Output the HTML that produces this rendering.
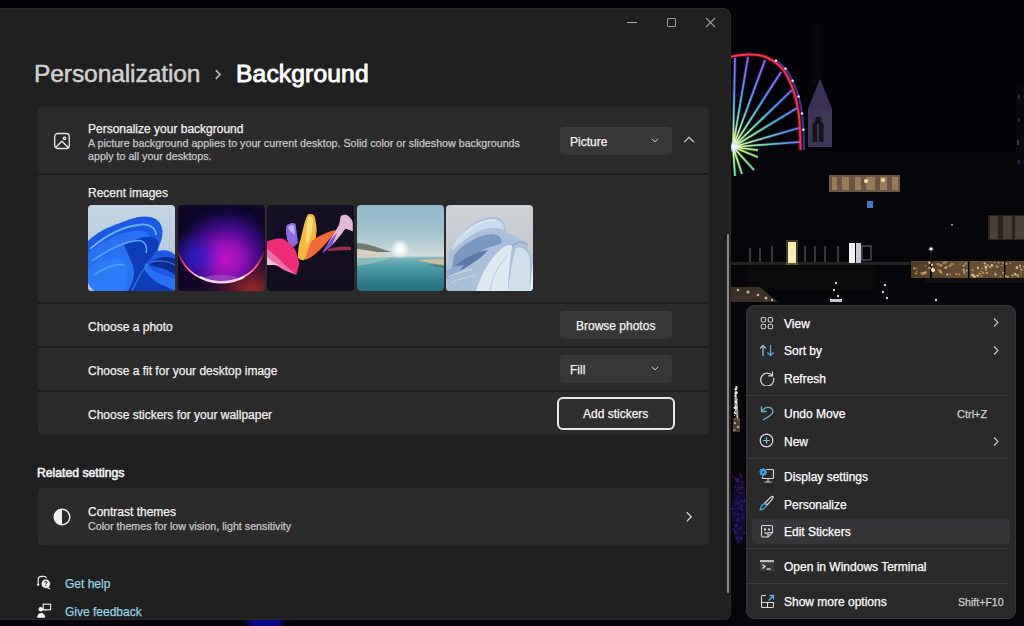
<!DOCTYPE html>
<html><head><meta charset="utf-8">
<style>
*{box-sizing:border-box;margin:0;padding:0}
html,body{width:1024px;height:626px;overflow:hidden;background:#040408;font-family:"Liberation Sans",sans-serif}
.abs{position:absolute}
.t{position:absolute;white-space:nowrap;line-height:0;transform:translateY(1px);-webkit-text-stroke:0.25px currentColor}
#wall{position:absolute;left:0;top:0;width:1024px;height:626px;background:#050409}
#win{position:absolute;left:0;top:8px;width:731px;height:612px;background:#202020;border-radius:0 8px 6px 0;border:1px solid #282828;border-left:none;overflow:hidden}
.card{position:absolute;left:38px;width:671px;background:#2b2b2b;border-radius:4px}
.sep{position:absolute;left:38px;width:671px;height:2px;background:#1e1e1e}
.btn{position:absolute;background:#373737;border-radius:4px;border-top:1px solid #3d3d3d}
.thumb{position:absolute;top:205px;width:87px;height:86px;border-radius:4px;overflow:hidden}
#menu{position:absolute;left:746px;top:305px;width:270px;height:314px;background:#2a2a2b;border-radius:8px;border:1px solid #353536}
.mi{color:#ffffff;font-size:12px}
.msep{position:absolute;left:747px;width:261px;height:1px;background:#3c3b3a}
</style></head><body>
<div id="wall"><svg width="1024" height="626" viewBox="0 0 1024 626" style="position:absolute;left:0;top:0">
<defs>
<radialGradient id="spg" gradientUnits="userSpaceOnUse" cx="733" cy="147" r="95"><stop offset="0" stop-color="#ffffff"/><stop offset=".12" stop-color="#c8f880"/><stop offset=".35" stop-color="#60e0b0"/><stop offset=".6" stop-color="#5a90ff"/><stop offset="1" stop-color="#a058ff"/></radialGradient>
<radialGradient id="glow" cx="50%" cy="50%" r="50%"><stop offset="0" stop-color="#fff" stop-opacity=".9"/><stop offset="1" stop-color="#fff" stop-opacity="0"/></radialGradient>
<radialGradient id="hubg" cx="50%" cy="50%" r="50%"><stop offset="0" stop-color="#fff"/><stop offset=".4" stop-color="#e0f0ff" stop-opacity=".8"/><stop offset="1" stop-color="#a0c0ff" stop-opacity="0"/></radialGradient>
<linearGradient id="str" x1="0" x2="1"><stop offset="0" stop-color="#6a4e34"/><stop offset=".5" stop-color="#8a6a44"/><stop offset="1" stop-color="#7a5e3e"/></linearGradient>
<linearGradient id="bsm" x1="0" x2="1"><stop offset="0" stop-color="#0a0a80" stop-opacity="0"/><stop offset=".2" stop-color="#0a0a88"/><stop offset=".8" stop-color="#0a0a88"/><stop offset="1" stop-color="#0a0a80" stop-opacity="0"/></linearGradient>
</defs>
<rect width="1024" height="626" fill="#040308"/>
<rect x="731" y="150" width="293" height="476" fill="#060509"/>
<line x1="733" y1="147" x2="735" y2="58" stroke="#6a6cff" stroke-width="3.5" opacity=".25"/><line x1="733" y1="147" x2="748" y2="57" stroke="#8a5cff" stroke-width="3.5" opacity=".25"/><line x1="733" y1="147" x2="765" y2="60" stroke="#9a60ff" stroke-width="3.5" opacity=".25"/><line x1="733" y1="147" x2="781" y2="72" stroke="#6a80ff" stroke-width="3.5" opacity=".25"/><line x1="733" y1="147" x2="792" y2="90" stroke="#40b8f0" stroke-width="3.5" opacity=".25"/><line x1="733" y1="147" x2="797" y2="108" stroke="#40d8c0" stroke-width="3.5" opacity=".25"/><line x1="733" y1="147" x2="799" y2="128" stroke="#8a70ff" stroke-width="3.5" opacity=".25"/><line x1="733" y1="147" x2="800" y2="142" stroke="#6a7aff" stroke-width="3.5" opacity=".25"/><line x1="733" y1="147" x2="772" y2="152" stroke="#a0f080" stroke-width="3.5" opacity=".25"/><line x1="733" y1="147" x2="760" y2="158" stroke="#d0f060" stroke-width="3.5" opacity=".25"/><line x1="733" y1="147" x2="754" y2="170" stroke="#90f080" stroke-width="3.5" opacity=".25"/><line x1="733" y1="147" x2="742" y2="174" stroke="#60e0a0" stroke-width="3.5" opacity=".25"/><line x1="733" y1="147" x2="735" y2="176" stroke="#40c8c0" stroke-width="3.5" opacity=".25"/><line x1="733" y1="147" x2="735" y2="58" stroke="url(#spg)" stroke-width="1.7"/><line x1="733" y1="147" x2="748" y2="57" stroke="url(#spg)" stroke-width="1.7"/><line x1="733" y1="147" x2="765" y2="60" stroke="url(#spg)" stroke-width="1.7"/><line x1="733" y1="147" x2="781" y2="72" stroke="url(#spg)" stroke-width="1.7"/><line x1="733" y1="147" x2="792" y2="90" stroke="url(#spg)" stroke-width="1.7"/><line x1="733" y1="147" x2="797" y2="108" stroke="url(#spg)" stroke-width="1.7"/><line x1="733" y1="147" x2="799" y2="128" stroke="url(#spg)" stroke-width="1.7"/><line x1="733" y1="147" x2="800" y2="142" stroke="url(#spg)" stroke-width="1.7"/><line x1="733" y1="147" x2="772" y2="152" stroke="url(#spg)" stroke-width="1.7"/><line x1="733" y1="147" x2="760" y2="158" stroke="url(#spg)" stroke-width="1.7"/><line x1="733" y1="147" x2="754" y2="170" stroke="url(#spg)" stroke-width="1.7"/><line x1="733" y1="147" x2="742" y2="174" stroke="url(#spg)" stroke-width="1.7"/><line x1="733" y1="147" x2="735" y2="176" stroke="url(#spg)" stroke-width="1.7"/>
<path d="M776.0,60.6 C777.6,62.0 782.7,65.4 785.5,68.7 C788.3,72.1 790.5,76.2 792.6,80.8 C794.8,85.5 797.0,91.1 798.5,96.5 C800.1,101.9 801.2,107.8 802.0,113.4 C802.8,118.9 803.0,123.7 803.4,129.8 C803.7,135.9 803.8,146.7 803.9,150.0" stroke="#3a5ad0" stroke-width="2" fill="none" opacity=".7"/>
<path d="M726,58 C726.8,57.8 727.1,57.4 730.6,56.8 C734.1,56.2 741.9,54.6 747.3,54.5 C752.7,54.4 758.5,54.8 763,56 C767.5,57.2 770.7,59.2 774,61.5 C777.3,63.8 780.4,66.2 783,69.5 C785.6,72.8 787.7,76.9 789.8,81.5 C791.9,86.1 793.9,91.6 795.4,97 C796.9,102.4 797.9,108.2 798.7,113.7 C799.5,119.2 799.7,124.0 800,130 C800.3,136.1 800.4,146.7 800.5,150" stroke="#ff2040" stroke-width="4" fill="none" opacity=".35"/>
<path d="M726,58 C726.8,57.8 727.1,57.4 730.6,56.8 C734.1,56.2 741.9,54.6 747.3,54.5 C752.7,54.4 758.5,54.8 763,56 C767.5,57.2 770.7,59.2 774,61.5 C777.3,63.8 780.4,66.2 783,69.5 C785.6,72.8 787.7,76.9 789.8,81.5 C791.9,86.1 793.9,91.6 795.4,97 C796.9,102.4 797.9,108.2 798.7,113.7 C799.5,119.2 799.7,124.0 800,130 C800.3,136.1 800.4,146.7 800.5,150" stroke="#ff3050" stroke-width="1.9" fill="none"/>
<circle cx="776.0" cy="60.6" r="1.2" fill="#f0f0ff"/><circle cx="785.5" cy="68.7" r="1.2" fill="#f0f0ff"/><circle cx="792.6" cy="80.8" r="1.2" fill="#f0f0ff"/><circle cx="798.5" cy="96.5" r="1.2" fill="#f0f0ff"/><circle cx="802.0" cy="113.4" r="1.2" fill="#f0f0ff"/><circle cx="803.4" cy="129.8" r="1.2" fill="#f0f0ff"/>
<circle cx="733" cy="147" r="6" fill="url(#hubg)"/>
<path d="M758 149H792V176H758Z" fill="#08070c"/>
<path d="M813 24H823V84H813Z" fill="#09080f"/>
<path d="M808 109L820 79L832 109V147H808Z" fill="#3e3656"/>
<path d="M808 109L820 79L832 109Z" fill="#3a3052"/>
<path d="M812.5 142V126A5.5 5.5 0 0 1 823.5 126V142Z" fill="#16121e"/>
<line x1="818" y1="124" x2="818" y2="142" stroke="#5a5470" stroke-width="1"/>
<circle cx="818.4" cy="119.6" r="3" fill="#16121e"/>
<rect x="829" y="175" width="71" height="17" fill="#6a5442"/>
<g fill="#9a7a58"><rect x="832" y="177" width="5" height="13"/><rect x="842" y="177" width="7" height="13"/><rect x="855" y="177" width="6" height="13"/><rect x="866" y="177" width="9" height="13"/><rect x="880" y="177" width="7" height="13"/><rect x="892" y="177" width="6" height="13"/></g>
<circle cx="866" cy="181" r="2" fill="#ffe8b0"/><circle cx="883" cy="180" r="2" fill="#ffd8a0"/>
<rect x="867" y="201" width="6" height="7" fill="#4a78c8"/>
<rect x="988" y="215" width="36" height="25" fill="#2a2420"/>
<g fill="#4a4038"><rect x="990" y="216" width="8" height="23"/><rect x="1003" y="216" width="9" height="23"/><rect x="1015" y="216" width="9" height="23"/></g>
<rect x="731" y="262" width="180" height="3" fill="#24221f"/><rect x="745" y="265" width="130" height="25" fill="#0c0b0c"/>
<g stroke="#5a5a54" stroke-width="1.2"><line x1="750" y1="248" x2="750" y2="262"/><line x1="760" y1="248" x2="760" y2="262"/><line x1="772" y1="246" x2="772" y2="262"/><line x1="805" y1="246" x2="805" y2="262"/><line x1="815" y1="246" x2="815" y2="262"/><line x1="825" y1="246" x2="825" y2="262"/><line x1="838" y1="246" x2="838" y2="262"/></g>
<rect x="786" y="240" width="12" height="25" fill="#f0e080" opacity=".25"/>
<rect x="788" y="242" width="8" height="21" fill="#f6eeb4"/>
<rect x="849" y="243" width="6" height="20" fill="#f0f0f0"/>
<rect x="856" y="243" width="5" height="20" fill="#c8c8d0"/>
<rect x="862" y="246" width="9" height="14" fill="none" stroke="#6a6a70" stroke-width="1"/>
<rect x="911" y="261" width="113" height="17" fill="url(#str)" opacity=".75"/><g fill="#050408"><rect x="930" y="261" width="2" height="17"/><rect x="968" y="261" width="1.5" height="17"/><rect x="1004" y="261" width="1.5" height="17"/></g>
<g opacity=".85"><circle cx="938.7" cy="270.2" r="0.9" fill="#c89060"/><circle cx="982.1" cy="263.0" r="0.6" fill="#c89060"/><circle cx="941.0" cy="265.5" r="1.4" fill="#c89060"/><circle cx="972.6" cy="270.2" r="0.9" fill="#d8a868"/><circle cx="938.0" cy="264.3" r="1.3" fill="#c89060"/><circle cx="995.0" cy="272.1" r="0.7" fill="#e8c890"/><circle cx="945.7" cy="262.5" r="1.3" fill="#c89060"/><circle cx="978.6" cy="275.8" r="0.9" fill="#c89060"/><circle cx="956.2" cy="274.0" r="1.0" fill="#d8a868"/><circle cx="1010.4" cy="263.5" r="0.7" fill="#d8a868"/><circle cx="940.9" cy="272.1" r="1.2" fill="#f0d8a8"/><circle cx="959.2" cy="274.5" r="1.1" fill="#c89060"/><circle cx="977.4" cy="275.6" r="1.1" fill="#e8c890"/><circle cx="1007.9" cy="276.9" r="1.1" fill="#d8a868"/><circle cx="990.2" cy="266.9" r="1.0" fill="#e8c890"/><circle cx="991.9" cy="265.2" r="1.3" fill="#f0d8a8"/><circle cx="943.9" cy="263.0" r="1.3" fill="#c89060"/><circle cx="921.9" cy="274.0" r="0.9" fill="#d8a868"/><circle cx="914.3" cy="268.4" r="0.9" fill="#e8c890"/><circle cx="916.9" cy="271.2" r="0.6" fill="#f0d8a8"/><circle cx="973.7" cy="275.8" r="0.8" fill="#d8a868"/><circle cx="1023.8" cy="266.6" r="0.7" fill="#e8c890"/><circle cx="1018.3" cy="276.6" r="0.8" fill="#f0d8a8"/><circle cx="929.5" cy="262.6" r="1.3" fill="#f0d8a8"/><circle cx="952.3" cy="264.1" r="1.3" fill="#c89060"/><circle cx="963.6" cy="269.8" r="1.1" fill="#e8c890"/><circle cx="981.5" cy="276.1" r="1.0" fill="#c89060"/><circle cx="983.0" cy="272.7" r="1.3" fill="#c89060"/><circle cx="1021.5" cy="269.8" r="1.0" fill="#e8c890"/><circle cx="1000.3" cy="276.8" r="0.9" fill="#c89060"/><circle cx="981.0" cy="271.5" r="0.6" fill="#f0d8a8"/><circle cx="964.2" cy="272.2" r="0.9" fill="#f0d8a8"/><circle cx="994.7" cy="262.3" r="0.6" fill="#e8c890"/><circle cx="1019.9" cy="265.8" r="1.0" fill="#f0d8a8"/><circle cx="931.9" cy="264.8" r="1.2" fill="#f0d8a8"/><circle cx="945.6" cy="267.7" r="1.2" fill="#e8c890"/><circle cx="1020.8" cy="272.3" r="0.7" fill="#d8a868"/><circle cx="985.2" cy="266.0" r="0.9" fill="#c89060"/><circle cx="984.7" cy="263.5" r="1.1" fill="#f0d8a8"/><circle cx="987.6" cy="265.4" r="1.2" fill="#d8a868"/><circle cx="921.0" cy="273.1" r="0.8" fill="#c89060"/><circle cx="942.3" cy="273.8" r="0.6" fill="#d8a868"/><circle cx="947.3" cy="274.5" r="1.1" fill="#f0d8a8"/><circle cx="950.1" cy="274.4" r="0.7" fill="#f0d8a8"/><circle cx="978.0" cy="268.3" r="1.0" fill="#f0d8a8"/><circle cx="964.0" cy="271.5" r="0.8" fill="#c89060"/><circle cx="916.0" cy="268.2" r="0.8" fill="#c89060"/><circle cx="1017.6" cy="275.2" r="1.4" fill="#c89060"/><circle cx="974.6" cy="276.8" r="1.2" fill="#e8c890"/><circle cx="995.5" cy="274.6" r="1.1" fill="#f0d8a8"/><circle cx="972.9" cy="275.3" r="1.3" fill="#f0d8a8"/><circle cx="925.4" cy="265.7" r="0.6" fill="#d8a868"/><circle cx="1012.4" cy="275.5" r="1.1" fill="#e8c890"/><circle cx="965.9" cy="263.8" r="1.0" fill="#d8a868"/><circle cx="986.2" cy="269.9" r="0.9" fill="#e8c890"/><circle cx="950.2" cy="265.8" r="1.3" fill="#c89060"/><circle cx="1002.9" cy="262.9" r="0.8" fill="#e8c890"/><circle cx="971.9" cy="274.3" r="0.7" fill="#f0d8a8"/><circle cx="1015.2" cy="274.1" r="1.3" fill="#e8c890"/><circle cx="966.6" cy="270.6" r="0.9" fill="#f0d8a8"/><circle cx="939.8" cy="271.3" r="1.0" fill="#e8c890"/><circle cx="965.0" cy="273.6" r="0.6" fill="#e8c890"/><circle cx="998.8" cy="262.7" r="0.6" fill="#c89060"/><circle cx="1021.2" cy="274.8" r="0.7" fill="#c89060"/><circle cx="947.4" cy="266.7" r="0.9" fill="#c89060"/><circle cx="977.7" cy="267.4" r="0.8" fill="#f0d8a8"/><circle cx="960.0" cy="263.9" r="0.6" fill="#c89060"/><circle cx="1001.1" cy="270.5" r="0.6" fill="#c89060"/><circle cx="979.7" cy="273.7" r="0.9" fill="#e8c890"/><circle cx="981.8" cy="268.5" r="0.9" fill="#c89060"/><circle cx="997.1" cy="266.7" r="1.4" fill="#c89060"/><circle cx="963.6" cy="265.7" r="1.0" fill="#e8c890"/><circle cx="1002.0" cy="265.4" r="0.7" fill="#e8c890"/><circle cx="1016.9" cy="267.6" r="1.3" fill="#f0d8a8"/><circle cx="925.6" cy="272.4" r="1.4" fill="#c89060"/><circle cx="986.8" cy="273.0" r="1.1" fill="#e8c890"/><circle cx="1002.9" cy="272.7" r="1.0" fill="#d8a868"/><circle cx="998.7" cy="262.7" r="0.7" fill="#e8c890"/><circle cx="985.8" cy="267.6" r="1.3" fill="#f0d8a8"/><circle cx="1006.3" cy="263.8" r="1.3" fill="#c89060"/><circle cx="1005.7" cy="276.3" r="1.1" fill="#e8c890"/><circle cx="916.1" cy="273.5" r="1.0" fill="#d8a868"/><circle cx="924.0" cy="273.2" r="1.3" fill="#e8c890"/><circle cx="973.6" cy="275.0" r="0.7" fill="#e8c890"/><circle cx="939.1" cy="264.7" r="0.8" fill="#c89060"/><circle cx="940.3" cy="271.0" r="1.4" fill="#c89060"/><circle cx="1020.2" cy="267.6" r="0.8" fill="#c89060"/><circle cx="1006.5" cy="276.5" r="0.9" fill="#c89060"/><circle cx="929.5" cy="268.0" r="1.3" fill="#d8a868"/><circle cx="922.7" cy="273.2" r="1.3" fill="#c89060"/></g>
<circle cx="933" cy="270" r="2" fill="#ffe8c0"/>
<rect x="925" y="278" width="99" height="5" fill="#121010"/>
<circle cx="931" cy="249" r="3" fill="url(#glow)"/><circle cx="931" cy="249" r="1.3" fill="#fff"/>
<line x1="931" y1="250" x2="931" y2="262" stroke="#2a2824" stroke-width="1"/>
<circle cx="952" cy="225" r="1" fill="#a0a0a0"/>
<rect x="1016" y="85" width="8" height="80" fill="#08080e"/><g fill="#2c3458"><rect x="1018" y="95" width="1.5" height="4"/><rect x="1018" y="118" width="1.5" height="4"/><rect x="1017" y="140" width="2" height="5"/><rect x="1018" y="160" width="1.5" height="4"/></g>
<path d="M731 287L760 287L778 302L731 302Z" fill="#3a3028"/>
<g fill="#d8c0a0" opacity=".9"><circle cx="738" cy="290" r="1.3"/><circle cx="748" cy="292" r="1.5"/><circle cx="758" cy="295" r="1.3"/><circle cx="766" cy="298" r="1.5"/><circle cx="772" cy="300" r="1.2"/></g>
<g fill="#d8d0c0"><circle cx="836" cy="283" r="1.2"/><circle cx="834" cy="290" r="1.2"/><circle cx="838" cy="296" r="1.2"/><circle cx="885" cy="285" r="1.2"/><circle cx="883" cy="292" r="1.2"/><circle cx="887" cy="298" r="1.2"/><circle cx="936" cy="300" r="1.2"/></g>
<rect x="830" y="299" width="12" height="3" fill="#c8c8d0"/>
<path d="M735.8 387C737 396 738.5 410 738.5 421C737 421 734.5 412 734.2 400Z" fill="#a09888"/>
<g><circle cx="736.2" cy="401.4" r="1.1" fill="#f0e8e0"/><circle cx="736.0" cy="401.8" r="0.9" fill="#f0e8e0"/><circle cx="736.0" cy="392.3" r="0.9" fill="#f0e8e0"/><circle cx="734.3" cy="413.0" r="0.7" fill="#f0e8e0"/><circle cx="736.4" cy="389.1" r="0.9" fill="#f0e8e0"/><circle cx="736.5" cy="387.4" r="1.1" fill="#f0e8e0"/><circle cx="736.4" cy="408.2" r="0.6" fill="#f0e8e0"/><circle cx="736.0" cy="386.5" r="0.5" fill="#f0e8e0"/><circle cx="735.6" cy="392.5" r="0.5" fill="#f0e8e0"/><circle cx="735.8" cy="401.8" r="1.0" fill="#f0e8e0"/><circle cx="736.4" cy="403.7" r="0.8" fill="#f0e8e0"/><circle cx="735.8" cy="408.5" r="0.7" fill="#f0e8e0"/><circle cx="738.5" cy="419.9" r="1.0" fill="#f0e8e0"/><circle cx="735.3" cy="410.1" r="0.6" fill="#f0e8e0"/><circle cx="735.1" cy="395.8" r="1.0" fill="#f0e8e0"/><circle cx="736.9" cy="399.6" r="0.7" fill="#f0e8e0"/><circle cx="737.7" cy="418.6" r="0.5" fill="#f0e8e0"/><circle cx="736.7" cy="393.1" r="0.8" fill="#f0e8e0"/><circle cx="735.5" cy="419.3" r="0.5" fill="#f0e8e0"/><circle cx="737.0" cy="407.4" r="0.7" fill="#f0e8e0"/><circle cx="735.8" cy="389.0" r="1.1" fill="#f0e8e0"/><circle cx="734.5" cy="411.8" r="0.6" fill="#f0e8e0"/><circle cx="735.4" cy="389.4" r="1.0" fill="#f0e8e0"/><circle cx="736.1" cy="392.0" r="0.8" fill="#f0e8e0"/><circle cx="736.4" cy="392.5" r="0.6" fill="#f0e8e0"/><circle cx="734.6" cy="407.9" r="0.8" fill="#f0e8e0"/><circle cx="735.6" cy="393.2" r="1.1" fill="#f0e8e0"/><circle cx="735.2" cy="413.3" r="1.0" fill="#f0e8e0"/><circle cx="735.8" cy="393.2" r="1.0" fill="#f0e8e0"/><circle cx="734.6" cy="407.8" r="1.1" fill="#f0e8e0"/><circle cx="735.6" cy="393.3" r="1.0" fill="#f0e8e0"/><circle cx="735.5" cy="397.2" r="0.5" fill="#f0e8e0"/><circle cx="736.1" cy="389.1" r="0.6" fill="#f0e8e0"/><circle cx="735.6" cy="406.4" r="0.8" fill="#f0e8e0"/><circle cx="735.9" cy="418.6" r="0.8" fill="#f0e8e0"/><circle cx="734.6" cy="415.5" r="0.6" fill="#f0e8e0"/><circle cx="737.5" cy="416.9" r="0.6" fill="#f0e8e0"/><circle cx="736.4" cy="392.5" r="1.1" fill="#f0e8e0"/><circle cx="736.7" cy="392.7" r="1.0" fill="#f0e8e0"/><circle cx="735.7" cy="406.5" r="0.6" fill="#f0e8e0"/></g>
<path d="M733 418H740V432H733Z" fill="#5a4a3e" opacity=".8"/>
<g fill="#b0a090"><circle cx="735" cy="423" r="1.2"/><circle cx="738" cy="427" r="1.2"/><circle cx="734.5" cy="430" r="1"/></g>
<ellipse cx="739" cy="510" rx="7" ry="34" fill="#120c38" opacity=".9"/>
<g opacity=".5"><circle cx="734.0" cy="494.7" r="0.5" fill="#8a2a80"/><circle cx="733.2" cy="529.5" r="1.3" fill="#2a2ab0"/><circle cx="733.1" cy="487.0" r="0.6" fill="#502a90"/><circle cx="737.5" cy="478.3" r="0.6" fill="#8a2a80"/><circle cx="740.2" cy="487.6" r="1.0" fill="#6a2070"/><circle cx="744.7" cy="499.8" r="1.0" fill="#2a2ab0"/><circle cx="737.4" cy="481.3" r="0.6" fill="#8a2a80"/><circle cx="742.6" cy="493.6" r="0.6" fill="#6a2070"/><circle cx="734.4" cy="512.0" r="1.0" fill="#2a2ab0"/><circle cx="732.8" cy="476.4" r="0.9" fill="#6a2070"/><circle cx="742.1" cy="509.2" r="1.0" fill="#5040c0"/><circle cx="735.9" cy="503.7" r="1.1" fill="#3a2aa0"/><circle cx="739.5" cy="489.1" r="0.9" fill="#8a2a80"/><circle cx="737.8" cy="496.0" r="0.6" fill="#2a2ab0"/><circle cx="741.8" cy="501.3" r="1.3" fill="#3a2aa0"/><circle cx="744.5" cy="501.5" r="1.2" fill="#2a2ab0"/><circle cx="743.4" cy="512.1" r="0.8" fill="#2020a0"/><circle cx="738.5" cy="496.5" r="0.6" fill="#5040c0"/><circle cx="735.5" cy="478.6" r="1.1" fill="#8a2a80"/><circle cx="741.1" cy="476.2" r="1.0" fill="#8a2a80"/><circle cx="737.8" cy="519.7" r="1.3" fill="#5040c0"/><circle cx="744.2" cy="496.3" r="0.7" fill="#2020a0"/><circle cx="732.8" cy="480.2" r="0.6" fill="#502a90"/><circle cx="737.1" cy="489.3" r="0.6" fill="#502a90"/><circle cx="739.1" cy="503.4" r="1.2" fill="#3a2aa0"/><circle cx="735.6" cy="532.5" r="1.4" fill="#5040c0"/><circle cx="736.9" cy="519.8" r="0.6" fill="#3a2aa0"/><circle cx="735.0" cy="484.3" r="0.5" fill="#6a2070"/><circle cx="734.4" cy="530.2" r="0.5" fill="#2020a0"/><circle cx="736.8" cy="501.3" r="1.4" fill="#2020a0"/><circle cx="738.7" cy="520.3" r="0.9" fill="#2a2ab0"/><circle cx="744.4" cy="533.0" r="0.9" fill="#5040c0"/><circle cx="738.3" cy="499.6" r="0.6" fill="#5040c0"/><circle cx="734.7" cy="476.7" r="0.6" fill="#6a2070"/><circle cx="733.3" cy="514.1" r="1.0" fill="#3a2aa0"/><circle cx="740.0" cy="538.4" r="1.3" fill="#2a2ab0"/><circle cx="733.9" cy="515.0" r="1.4" fill="#2020a0"/><circle cx="738.2" cy="514.2" r="1.3" fill="#2a2ab0"/><circle cx="738.1" cy="541.5" r="0.8" fill="#5040c0"/><circle cx="741.7" cy="482.1" r="0.7" fill="#8a2a80"/><circle cx="734.1" cy="530.0" r="0.7" fill="#2a2ab0"/><circle cx="736.7" cy="538.6" r="1.2" fill="#2a2ab0"/><circle cx="740.4" cy="492.9" r="1.1" fill="#6a2070"/><circle cx="736.8" cy="490.3" r="0.8" fill="#6a2070"/><circle cx="739.0" cy="487.6" r="0.8" fill="#8a2a80"/><circle cx="742.5" cy="487.6" r="1.2" fill="#6a2070"/><circle cx="741.6" cy="529.3" r="0.7" fill="#3a2aa0"/><circle cx="741.5" cy="506.5" r="1.2" fill="#2a2ab0"/><circle cx="734.5" cy="505.1" r="0.9" fill="#2020a0"/><circle cx="744.8" cy="537.6" r="0.6" fill="#2020a0"/><circle cx="738.1" cy="479.2" r="0.7" fill="#502a90"/><circle cx="743.7" cy="515.7" r="0.9" fill="#2a2ab0"/><circle cx="742.4" cy="517.7" r="1.3" fill="#2a2ab0"/><circle cx="737.1" cy="480.4" r="1.2" fill="#8a2a80"/><circle cx="734.3" cy="505.5" r="0.6" fill="#2020a0"/><circle cx="741.4" cy="538.2" r="0.9" fill="#5040c0"/><circle cx="741.4" cy="538.3" r="1.4" fill="#3a2aa0"/><circle cx="739.7" cy="473.9" r="1.2" fill="#502a90"/><circle cx="742.7" cy="482.2" r="1.1" fill="#502a90"/><circle cx="739.1" cy="496.5" r="0.5" fill="#3a2aa0"/><circle cx="741.4" cy="528.0" r="1.0" fill="#2a2ab0"/><circle cx="737.6" cy="537.4" r="1.2" fill="#3a2aa0"/><circle cx="735.3" cy="486.8" r="1.0" fill="#502a90"/><circle cx="736.2" cy="525.5" r="1.3" fill="#5040c0"/><circle cx="741.6" cy="476.3" r="1.1" fill="#502a90"/><circle cx="738.7" cy="529.1" r="1.0" fill="#3a2aa0"/><circle cx="732.2" cy="508.6" r="1.2" fill="#5040c0"/><circle cx="742.1" cy="514.6" r="0.7" fill="#3a2aa0"/><circle cx="741.4" cy="505.1" r="0.8" fill="#2a2ab0"/><circle cx="739.2" cy="508.3" r="1.3" fill="#2a2ab0"/></g>
<rect x="244" y="619" width="42" height="7" fill="url(#bsm)"/>
</svg></div>

<div id="win"></div>

<!-- window content (page coords) -->
<div class="abs" style="left:0;top:0;width:731px;height:626px">
  <!-- caption buttons -->
  <div class="abs" style="left:627px;top:22px;width:10px;height:1px;background:#a8a8a8"></div>
  <div class="abs" style="left:667px;top:18px;width:9px;height:9px;border:1px solid #a0a0a0;border-radius:1px"></div>
  <svg class="abs" style="left:705px;top:17px" width="11" height="11" viewBox="0 0 11 11"><path d="M1 1L10 10M10 1L1 10" stroke="#a0a0a0" stroke-width="1.1"/></svg>

  <div class="t m" style="left:34px;top:73px;font-size:24.6px;letter-spacing:-0.12px;color:#d0d0d0;-webkit-text-stroke:0.5px #d0d0d0">Personalization</div>
  <svg class="abs" style="left:214px;top:69px" width="8" height="11" viewBox="0 0 8 11"><path d="M1.8 1.2L6 5.5L1.8 9.8" stroke="#b8b8b8" stroke-width="1.7" fill="none"/></svg>
  <div class="t m" style="left:236px;top:73px;font-size:24.6px;color:#ffffff;letter-spacing:0.15px;-webkit-text-stroke:0.9px #ffffff">Background</div>

  <!-- main card -->
  <div class="card" style="top:107px;height:328px"></div>
  <div class="sep" style="top:173px"></div>
  <div class="sep" style="top:302px"></div>
  <div class="sep" style="top:346px"></div>
  <div class="sep" style="top:390px"></div>

  <svg class="abs" style="left:53px;top:132px" width="18" height="18" viewBox="0 0 18 18" fill="none" stroke="#e8e8e8" stroke-width="1.3"><rect x="1.7" y="1.5" width="14.6" height="15" rx="3"/><path d="M2.5 15.8L8.9 9.2L15.5 15.8"/><circle cx="11.5" cy="6.3" r="1.2"/></svg>
  <div class="t m" style="left:88px;top:128px;font-size:12px;color:#f2f2f2">Personalize your background</div>
  <div class="t m" style="left:88px;top:142px;font-size:10.7px;color:#c6c6c6">A picture background applies to your current desktop. Solid color or slideshow backgrounds</div>
  <div class="t m" style="left:88px;top:155px;font-size:10.7px;color:#c6c6c6">apply to all your desktops.</div>

  <div class="btn" style="left:560px;top:127px;width:112px;height:28px"></div>
  <div class="t m" style="left:570px;top:141px;font-size:12px;color:#f5f5f5">Picture</div>
  <svg class="abs" style="left:650px;top:137px" width="10" height="7" viewBox="0 0 10 7"><path d="M1.8 1.8L5 4.8L8.2 1.8" stroke="#cccccc" stroke-width="1" fill="none"/></svg>
  <svg class="abs" style="left:683px;top:135px" width="12" height="9" viewBox="0 0 12 9"><path d="M1.2 7.2L6 2.4L10.8 7.2" stroke="#d4d4d4" stroke-width="1.2" fill="none"/></svg>

  <div class="t m" style="left:88px;top:192px;font-size:12px;color:#f0f0f0">Recent images</div>

  <!-- thumbnails -->
  <div class="thumb" style="left:88px;background:linear-gradient(180deg,#c4d4e2,#aec4d8)">
    <svg width="87" height="86" viewBox="0 0 87 86">
      <path d="M0 36C8 28 20 22 32 18C42 14 52 10 62 12C72 14 76 22 74 32C73 38 70 42 70 46C76 44 84 46 87 50L87 74C84 78 80 82 78 86L6 86C3 82 1 80 0 78Z" fill="#1a5ae4"/>
      <path d="M0 48C14 36 30 28 46 26C58 24 64 30 62 40C60 50 56 56 60 62C66 68 76 70 87 74L87 86L0 86Z" fill="#2a72f4"/>
      <path d="M36 40C50 32 66 28 70 36C72 44 64 52 58 58C54 62 58 70 70 78L87 86L40 86C46 76 48 66 44 58Z" fill="#0f3cb8"/>
      <path d="M60 60C68 52 78 50 87 54L87 70C80 64 70 62 60 60Z" fill="#0a2c90"/>
      <path d="M0 64C10 56 22 52 32 54C40 56 42 66 36 86L0 86Z" fill="#2a7cf8"/>
      <path d="M2 44C16 32 34 22 50 20C60 18 68 22 68 30" stroke="#6ab4ff" stroke-width="1.8" fill="none"/>
      <path d="M4 56C18 46 32 38 46 36C56 34 60 40 58 48" stroke="#5aa8ff" stroke-width="1.5" fill="none"/>
      <path d="M6 70C18 62 28 58 36 60" stroke="#58a4ff" stroke-width="1.5" fill="none"/>
      <path d="M44 86C50 74 54 64 62 58C70 54 80 56 87 60" stroke="#3a78e0" stroke-width="1.2" fill="none"/>
      <path d="M0 78C2 82 4 84 6 86L0 86Z" fill="#b8cce0"/>
    </svg>
  </div>
  <div class="thumb" style="left:178px;background:radial-gradient(ellipse 60% 50% at 85% 100%,#9a2a20 0%,#3a0c30 60%,#120826 100%)">
    <svg width="87" height="86" viewBox="0 0 87 86">
      <defs>
        <radialGradient id="sph" cx="56%" cy="74%" r="62%"><stop offset="0" stop-color="#c414c4"/><stop offset=".3" stop-color="#9010b8"/><stop offset=".62" stop-color="#3a0a80"/><stop offset=".85" stop-color="#14083c"/><stop offset="1" stop-color="#0a0628"/></radialGradient>
        <radialGradient id="sphb" cx="20%" cy="72%" r="30%"><stop offset="0" stop-color="#2a20d0" stop-opacity=".8"/><stop offset="1" stop-color="#2a20d0" stop-opacity="0"/></radialGradient>
        <linearGradient id="rimg" x1="0" y1="0" x2="0" y2="1"><stop offset="0" stop-color="#ff3a8a" stop-opacity=".2"/><stop offset=".5" stop-color="#ff4a9a"/><stop offset="1" stop-color="#ffe8f0"/></linearGradient>
      </defs>
      <circle cx="43" cy="33" r="44" fill="url(#sph)"/>
      <circle cx="43" cy="33" r="44" fill="url(#sphb)"/>
      <path d="M0 46C6 66 22 77 43 77C64 77 80 66 86 46" stroke="url(#rimg)" stroke-width="1.8" fill="none"/>
      <path d="M22 72C30 76 36 77.5 43 77.5C52 77.5 58 76 66 72" stroke="#fff4f8" stroke-width="2" fill="none"/>
      <ellipse cx="43" cy="74" rx="18" ry="4" fill="#d090e0" opacity=".35"/>
    </svg>
  </div>
  <div class="thumb" style="left:267px;background:linear-gradient(180deg,#150f24,#120d1c)">
    <svg width="87" height="86" viewBox="0 0 87 86">
      <path d="M19.4 20.8C22 18 27 17 28.7 19.4L31 38L24 44C20 36 18 28 19.4 20.8Z" fill="#8a6ae0"/>
      <path d="M21 22C23 20 26 19.5 27 21L28 30C25 28 22 26 21 22Z" fill="#c0b0f0"/>
      <path d="M0 36.6C6 34 12 33 16.5 34C22 38 27 42 29 46.7C31 52 32 56 32 59.6C31 64 30 67 29.5 69.7C25 68 22 66 19.4 65.4C15 62 12 60 9.3 58C5 57 2 56 0 55.3Z" fill="#f02c78"/>
      <path d="M0 44C6 48 12 54 18 60C22 64 26 67 29.5 69.7C24 68 18 66 12 62C6 59 2 58 0 58Z" fill="#f070a8"/>
      <path d="M0 52C4 56 8 58 12 60L0 60Z" fill="#e8c0d8"/>
      <path d="M41 9.3C45 8 48 10 48.1 13.6C49 18 49.6 22 49.6 26.6C49 34 47 40 45.3 46.7C42 50 39 53 36.6 55.3C34 55 32 54 30.9 52.4C31 44 32 38 33.8 33.8C36 24 38 14 41 9.3Z" fill="#f4b83a"/>
      <path d="M41 12C44 11 46 13 46 16C46 24 44 32 40 40C38 36 39 24 41 12Z" fill="#f8dc80"/>
      <path d="M45.3 35.2C52 31 60 27 68.2 25.1C69 27 67 29 65.4 30.9C60 37 56 42 52.4 45.3C48 50 42 54 38 55C40 48 42 40 45.3 35.2Z" fill="#f06a3a"/>
      <path d="M74 10.8C77 9 80 10 81 10.8C84 13 85.8 16 85.8 18L85.8 26.6C83 25 80 24 78.3 23.7C74 30 70 35 65.4 39.5C62 43 58 46 55.3 48.1C60 40 66 30 72 20C73 16 73 13 74 10.8Z" fill="#e4b8d4"/>
      <path d="M65 40C62 43 58 46 55.3 48.1C60 40 64 34 70 28Z" fill="#7a4ad8"/>
      <path d="M61 44C68 42 76 41 84 42L84 45C76 45 68 46 61 46Z" fill="#b03a58" opacity=".8"/>
    </svg>
  </div>
  <div class="thumb" style="left:357px;background:linear-gradient(180deg,#8fbac9 0%,#a6c4cf 35%,#c2d4d8 52%,#d2dcdc 59%,#78b2ba 62%,#4e9ca8 72%,#2f7f8e 88%,#24707e 100%)">
    <svg width="87" height="86" viewBox="0 0 87 86">
      <defs><radialGradient id="sun" cx="50%" cy="50%" r="50%"><stop offset="0" stop-color="#fff"/><stop offset=".35" stop-color="#fff" stop-opacity=".9"/><stop offset="1" stop-color="#fff" stop-opacity="0"/></radialGradient></defs>
      <circle cx="43" cy="44" r="10" fill="url(#sun)"/>
      <path d="M0 38C8 38 20 42 34 47L0 47Z" fill="#6e7a70"/>
      <path d="M0 44C12 45 26 48 40 52L0 53Z" fill="#d6d0c4"/>
      <path d="M0 53C10 53 22 53 34 53C24 57 12 59 0 61Z" fill="#9ac4c4" opacity=".6"/>
      <path d="M60 55C70 54 80 54 87 54L87 60C78 59 68 57 60 55Z" fill="#cdbf9c"/>
      <path d="M72 59C78 60 83 60 87 61L87 63C80 62 76 61 72 59Z" fill="#5a7a60"/>
    </svg>
  </div>
  <div class="thumb" style="left:446px;background:linear-gradient(180deg,#ced1d6,#bcc2ca)">
    <svg width="87" height="86" viewBox="0 0 87 86">
      <path d="M0 62C2 50 6 40 14 30C24 18 36 12 48 12C56 12 60 18 60 28C66 29 74 32 80 40C85 48 87 56 87 66V86H0Z" fill="#a9c0d8"/>
      <path d="M6 42C14 26 30 15 46 14C53 14 58 18 58 25C50 21 36 23 24 31C16 36 10 42 6 46Z" fill="#c8dbec"/>
      <path d="M8 50C18 38 32 30 46 29C53 29 57 33 55 39C45 41 30 47 18 57C13 61 9 63 6 64Z" fill="#7a98c0"/>
      <path d="M10 60C20 52 31 47 42 45C36 53 26 59 14 66Z" fill="#5a78a8"/>
      <path d="M0 66C6 62 12 60 18 60C14 66 8 70 2 74L0 74Z" fill="#90aacc"/>
      <path d="M2 72C10 68 18 66 26 64" stroke="#c8d8ea" stroke-width="1.2" fill="none"/>
      <path d="M4 78C12 74 20 72 30 70" stroke="#c0d2e6" stroke-width="1.2" fill="none"/>
      <path d="M30 86C35 70 42 56 54 45C58 41 63 39 66 41C64 56 62 72 62 86Z" fill="#dfe9f3"/>
      <path d="M44 86C46 72 52 60 62 50" stroke="#b8cce0" stroke-width="1" fill="none"/>
      <path d="M62 86C64 70 66 55 70 43C76 41 82 46 84 54C84 66 84 76 84 86Z" fill="#d0dfec"/>
      <path d="M66 41C72 36 78 36 82 40" stroke="#8aa8cc" stroke-width="1.5" fill="none"/>
      <path d="M84 86C85 74 86 62 87 56V86Z" fill="#e6eef6"/>
      <path d="M18 30C28 20 40 15 50 15" stroke="#e4eef8" stroke-width="1.2" fill="none"/>
    </svg>
  </div>

  <div class="t m" style="left:88px;top:326px;font-size:12px;color:#f0f0f0">Choose a photo</div>
  <div class="btn" style="left:560px;top:311px;width:112px;height:28px"></div>
  <div class="t m" style="left:576px;top:325px;font-size:12px;color:#f5f5f5">Browse photos</div>

  <div class="t m" style="left:88px;top:370px;font-size:12px;color:#f0f0f0">Choose a fit for your desktop image</div>
  <div class="btn" style="left:560px;top:355px;width:112px;height:28px"></div>
  <div class="t m" style="left:570px;top:369px;font-size:12px;color:#f5f5f5">Fill</div>
  <svg class="abs" style="left:650px;top:365px" width="10" height="7" viewBox="0 0 10 7"><path d="M1.8 1.8L5 4.8L8.2 1.8" stroke="#cccccc" stroke-width="1" fill="none"/></svg>

  <div class="t m" style="left:88px;top:414px;font-size:12px;color:#f0f0f0">Choose stickers for your wallpaper</div>
  <div class="abs" style="left:557px;top:397px;width:118px;height:33px;border:2px solid #e8e8e8;border-radius:6px;background:#2f2f2f"></div>
  <div class="t m" style="left:583px;top:413px;font-size:12px;color:#f5f5f5">Add stickers</div>

  <div class="t m" style="left:37px;top:472px;font-size:12.2px;color:#f2f2f2;-webkit-text-stroke:0.55px #f2f2f2">Related settings</div>
  <div class="card" style="top:488px;height:57px"></div>
  <svg class="abs" style="left:53px;top:508px" width="18" height="18" viewBox="0 0 18 18"><circle cx="9" cy="9" r="7.8" fill="none" stroke="#f0f0f0" stroke-width="1.4"/><path d="M9 1.2A7.8 7.8 0 0 0 9 16.8Z" fill="#f0f0f0"/></svg>
  <div class="t m" style="left:88px;top:511px;font-size:12px;color:#f2f2f2">Contrast themes</div>
  <div class="t m" style="left:88px;top:525px;font-size:10.7px;color:#c6c6c6">Color themes for low vision, light sensitivity</div>
  <svg class="abs" style="left:684px;top:511px" width="8" height="12" viewBox="0 0 8 12"><path d="M2.8 1.2L7.2 5.8L2.8 10.4" stroke="#d4d4d4" stroke-width="1.3" fill="none"/></svg>

  <!-- help -->
  <svg class="abs" style="left:37px;top:575px" width="16" height="16" viewBox="0 0 16 16"><path d="M1.2 10.5V4.5C1.2 2.6 2.6 1.4 4.5 1.4H6.5C8 1.4 9 2 9.5 3.2" stroke="#f0f0f0" stroke-width="1.2" fill="none"/><path d="M0.3 9L1.2 10.8L2.2 9" stroke="#f0f0f0" stroke-width="1" fill="none"/><circle cx="8.8" cy="8.8" r="4.7" fill="#f0f0f0" stroke="#202020" stroke-width=".8"/><path d="M11.5 12L14 14.6L10.2 13.4Z" fill="#f0f0f0"/><text x="8.8" y="11.3" font-size="6.5" text-anchor="middle" fill="#202020" font-family="Liberation Sans" font-weight="bold">?</text></svg>
  <div class="t m" style="left:65px;top:583px;font-size:12px;color:#96d0e4">Get help</div>
  <svg class="abs" style="left:37px;top:603px" width="15" height="15" viewBox="0 0 15 15"><rect x="6.2" y="1.2" width="7.4" height="5.6" fill="none" stroke="#f0f0f0" stroke-width="1.1"/><path d="M8 6.5L7.6 8.6L9.8 6.5Z" fill="#f0f0f0"/><circle cx="3.8" cy="6.2" r="2.3" fill="#f0f0f0"/><path d="M0.2 14.8C0.2 11.5 1.8 10 4.2 10C6.6 10 8.2 11.5 8.2 14.8Z" fill="#f0f0f0"/></svg>
  <div class="t m" style="left:65px;top:611px;font-size:12px;color:#96d0e4">Give feedback</div>

  <!-- scrollbar -->
  <div class="abs" style="left:727px;top:234px;width:2px;height:359px;background:#8a8a8a;border-radius:1px"></div>
</div>

<!-- context menu -->
<div id="menu"></div>
<div class="abs" style="left:0;top:0;width:1024px;height:626px">

  <div class="abs" style="left:752px;top:519px;width:258px;height:25px;background:#363638;border-radius:4px"></div>
  <!-- menu icons -->
  <svg class="abs" style="left:760px;top:316px" width="15" height="14" viewBox="0 0 15 14" fill="none" stroke="#d0d0d0" stroke-width="1.05"><rect x="1.2" y="1.5" width="4.4" height="4.4" rx="1.4"/><rect x="8.2" y="1.5" width="4.4" height="4.4" rx="1.4"/><rect x="1.2" y="8.3" width="4.4" height="4.4" rx="1.4"/><rect x="8.2" y="8.3" width="4.4" height="4.4" rx="1.4"/></svg>
  <svg class="abs" style="left:759px;top:344px" width="17" height="13" viewBox="0 0 17 13" fill="none" stroke-width="1.3"><path d="M4 12V1.5M1 4.5L4 1.5L7 4.5" stroke="#9fbccc"/><path d="M11.5 1V11.5M8.5 8.5L11.5 11.5L14.5 8.5" stroke="#4ea9dc"/></svg>
  <svg class="abs" style="left:759px;top:370px" width="16" height="16" viewBox="0 0 16 16" fill="none" stroke="#d8d8d8" stroke-width="1.2"><path d="M13.2 5.5A6.5 6.5 0 1 0 14.5 8"/><path d="M13.5 1.5V5.8H9.2"/></svg>
  <svg class="abs" style="left:760px;top:405px" width="15" height="16" viewBox="0 0 15 16" fill="none" stroke="#6bb4c8" stroke-width="1.3"><path d="M1.5 1.5V6.5H6.5"/><path d="M2 6C4 3 7 2 9.5 2.5C12 3 13.5 5.5 12.5 8C11.5 10.5 6 13 3 15"/></svg>
  <svg class="abs" style="left:759px;top:433px" width="15" height="15" viewBox="0 0 15 15" fill="none" stroke-width="1.2"><circle cx="7.5" cy="7.5" r="6.3" stroke="#d8d8d8"/><path d="M7.5 4.2V10.8M4.2 7.5H10.8" stroke="#7fc0dc"/></svg>
  <svg class="abs" style="left:759px;top:468px" width="16" height="16" viewBox="0 0 16 16" fill="none" stroke-width="1.2"><rect x="3.5" y="1.5" width="11" height="9" rx="1" stroke="#d8d8d8"/><path d="M9 10.5V13.5M5.5 14H12.5" stroke="#d8d8d8"/><g transform="translate(4.2 4.2)"><circle r="4.2" fill="#2a2a2b"/><path d="M-0.8 -3.6H0.8L1 -2.6L2 -2.1L2.9 -2.7L3.9 -1.6L3.3 -0.7L3.7 0.3L4.6 0.6V2H3.6L3.1 3L3.7 3.9L2.6 4.8L1.7 4.2L0.8 4.6V5.6H-0.8L-1 4.6L-2 4.1L-2.9 4.7L-3.9 3.6L-3.3 2.7L-3.7 1.7L-4.6 1.4V0H-3.6L-3.1 -1L-3.7 -1.9L-2.6 -2.8L-1.7 -2.2L-0.8 -2.6Z" transform="translate(0 -1) scale(.85)" fill="#40a8ee" stroke="none"/><circle cy="0" r="1" fill="#2a2a2b"/></g></svg>
  <svg class="abs" style="left:759px;top:495px" width="16" height="16" viewBox="0 0 16 16" fill="none" stroke-width="1.2"><path d="M14 1.5C15 2.5 12 6 8 10L6 8C10 4 13 0.5 14 1.5Z" stroke="#d8d8d8"/><path d="M5.8 8.3L7.7 10.2C6.5 12.5 4 14.5 1.2 14.8C1.5 12 3.5 9.5 5.8 8.3Z" stroke="#52a8e0"/></svg>
  <svg class="abs" style="left:760px;top:524px" width="15" height="14" viewBox="0 0 15 14" fill="none" stroke="#d8d8d8" stroke-width="1.1"><path d="M1.5 3A1.5 1.5 0 0 1 3 1.5H11A1.5 1.5 0 0 1 12.5 3V8.5L8 13H3A1.5 1.5 0 0 1 1.5 11.5Z"/><path d="M12.5 8.5H9.5A1.5 1.5 0 0 0 8 10V13"/><circle cx="5" cy="5.5" r=".6" fill="#d8d8d8"/><circle cx="9" cy="5.5" r=".6" fill="#d8d8d8"/><path d="M4.5 8.5C5.5 9.5 7 9.5 8 8.8"/></svg>
  <svg class="abs" style="left:760px;top:560px" width="15" height="11" viewBox="0 0 15 11"><rect x="0" y="0" width="14" height="11" fill="#3a3a3a"/><rect x="0" y="0" width="14" height="2.2" fill="#bdbdbd"/><path d="M2.5 4.5L5 6.5L2.5 8.5" stroke="#f0f0f0" stroke-width="1.2" fill="none"/><path d="M6.5 9H10.5" stroke="#f0f0f0" stroke-width="1.2"/></svg>
  <svg class="abs" style="left:760px;top:594px" width="15" height="15" viewBox="0 0 15 15" fill="none" stroke-width="1.1"><path d="M6 1.5H2.5A1 1 0 0 0 1.5 2.5V12.5A1 1 0 0 0 2.5 13.5H12.5A1 1 0 0 0 13.5 12.5V8.5H7.5V13.5M1.5 8.5H7.5" stroke="#d8d8d8"/><path d="M8.5 6.5L13.5 1.5M9.5 1.5H13.5V5.5" stroke="#5ab0e8" stroke-width="1.3"/></svg>
  <svg class="abs" style="left:992px;top:317px" width="8" height="11" viewBox="0 0 8 11"><path d="M2 1.5L6 5.5L2 9.5" stroke="#c8c8c8" stroke-width="1.1" fill="none"/></svg>
  <svg class="abs" style="left:992px;top:345px" width="8" height="11" viewBox="0 0 8 11"><path d="M2 1.5L6 5.5L2 9.5" stroke="#c8c8c8" stroke-width="1.1" fill="none"/></svg>
  <svg class="abs" style="left:992px;top:436px" width="8" height="11" viewBox="0 0 8 11"><path d="M2 1.5L6 5.5L2 9.5" stroke="#c8c8c8" stroke-width="1.1" fill="none"/></svg>
  <div class="t m mi" style="left:784px;top:323px">View</div>
  <div class="t m mi" style="left:784px;top:350px">Sort by</div>
  <div class="t m mi" style="left:784px;top:378px">Refresh</div>
  <div class="msep" style="top:395px"></div>
  <div class="t m mi" style="left:784px;top:413px">Undo Move</div>
  <div class="t m" style="left:957px;top:413px;font-size:11px;color:#d0d0d0">Ctrl+Z</div>
  <div class="t m mi" style="left:784px;top:441px">New</div>
  <div class="msep" style="top:458px"></div>
  <div class="t m mi" style="left:784px;top:476px">Display settings</div>
  <div class="t m mi" style="left:784px;top:504px">Personalize</div>
  <div class="t m mi" style="left:784px;top:531px">Edit Stickers</div>
  <div class="msep" style="top:548px"></div>
  <div class="t m mi" style="left:784px;top:566px">Open in Windows Terminal</div>
  <div class="msep" style="top:583px"></div>
  <div class="t m mi" style="left:784px;top:601px">Show more options</div>
  <div class="t m" style="left:958px;top:601px;font-size:10.6px;color:#d0d0d0">Shift+F10</div>
</div>
</body></html>
